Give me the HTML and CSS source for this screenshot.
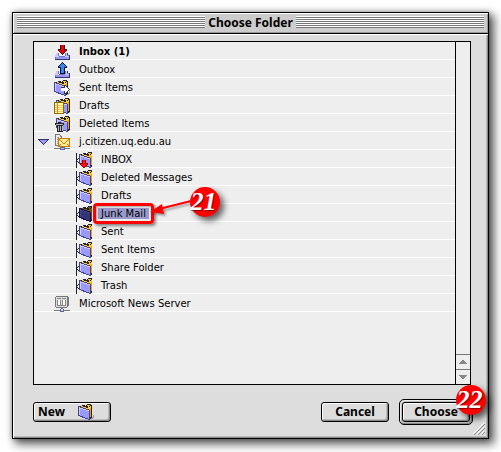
FILE: index.html
```html
<!DOCTYPE html>
<html lang="en">
<head>
<meta charset="utf-8">
<title>Choose Folder</title>
<link rel="stylesheet" href="styles.css">
</head>
<body>
<svg class="defs" aria-hidden="true">
  <symbol id="tray" viewBox="0 0 16 16">
    <path fill="#7777bb" d="M2 9h3v3h6V9h3v2h1v4H1v-4h1z"/>
    <path fill="#ccccff" d="M2 9h2v3h1v1h6v-1h1V9h1v3h2v1H1v-2h1z"/>
    <path fill="#9999ff" d="M2 13h13v2H2z"/>
    <path fill="#333366" d="M1 15h15v1H1zM15 11h1v5h-1zM13 9h1v2h-1z"/>
  </symbol>
  <symbol id="folder" viewBox="0 0 16 16">
    <path fill="#444" opacity=".4" d="M12 13h3v-2h1v3h-1v1h-3z"/>
    <path fill="#222" d="M2 2h2V1h3v1h1V1h1V0h4v1h1v13h-1v1h-2V6L2 3z"/>
    <path class="folder-paper" d="M3 2h2v1h3v1h2V2H9V1h3v1h1v2h-1v1h-2L3 3z"/>
    <path class="folder-edge" d="M12 4h1v9h-1v1h-1V5h1z"/>
    <path fill="#222" d="M5 2h1v1H5zM8 2h1v1H8zM11 2h1v1h-1z"/>
    <path class="folder-line" d="M0 2h2v1h3v1h3v1h3v1h1v10h-2v-1H7v-1H4v-1H2v-1H0z"/>
    <path class="folder-face" d="M1 3h1v1h3v1h3v1h3v9h-1v-1H7v-1H5v-1H2v-1H1z"/>
    <path class="folder-shine" d="M1 3h1v1h3v1h3v1h3v1H8V6H5V5H2v6H1z"/>
  </symbol>
  <symbol id="linked" viewBox="0 0 16 16">
    <use href="#folder" x="3" width="16" height="16"/>
    <path fill="#222" d="M0 1h1v15H0zM1 7h1v1H1zM2 6h1v1H2zM1 9h1v1H1zM2 10h1v1H2z"/>
  </symbol>
  <symbol id="server" viewBox="0 0 16 16">
    <path fill="#777" d="M1 1h1V0h12v1h1v9h-1v1h-1v1H2v-1H1z"/>
    <path fill="#ddd" d="M2 1h11v10H2z"/>
    <path fill="#888" d="M3 2h4v1H3zM8 2h4v1H8zM3 4h1v5H3zM6 4h1v5H6zM8 4h1v5H8zM11 4h1v5h-1zM3 9h9v1H3z"/>
    <path fill="#fff" d="M4 4h2v5H4zM9 4h2v5H9z"/>
    <path fill="#777" d="M7 12h2v1H7zM0 14h16v1H0z"/>
    <path fill="#666699" d="M6 13h4v3H6z"/><path fill="#ccccff" d="M7 13h2v2H7z"/>
  </symbol>
</svg>

<main class="window">
  <header class="titlebar">
    <span class="stripes"></span>
    <h1 class="title">Choose Folder</h1>
    <span class="stripes"></span>
  </header>

  <form class="content">
    <div class="pane">
      <ul class="tree">
        <li class="row row-unread">
          <svg class="icon" viewBox="0 0 16 16"><use href="#tray"/><path fill="#222" d="M6 1h5v4h2v2h-1v1h-1v1h-1v1H9v1H8v-1H7V9H6V8H5V7H4V5h2z"/><path fill="#e00" d="M7 1h3v5h2v1h-1v1h-1v1H9v1H8V9H7V8H6V7H5V6h2z"/></svg>
          <span>Inbox (1)</span>
        </li>
        <li class="row">
          <svg class="icon" viewBox="0 0 16 16"><use href="#tray"/><path fill="#113" d="M8 0h1v1h1v1h1v1h1v1h1v2h-2v6H6V6H4V4h1V3h1V2h1V1h1z"/><path fill="#3388ee" d="M8 1h1v1h1v1h1v1h1v1h-2v6H7V5H5V4h1V3h1V2h1z"/></svg>
          <span>Outbox</span>
        </li>
        <li class="row">
          <svg class="icon" viewBox="0 0 16 16"><use href="#folder" width="16" height="16"/><path fill="#335" d="M7 7h3V5h2v1h1v1h1v1h1v1h1v1h-1v1h-1v1h-1v1h-1v1h-2v-3H7z"/><path fill="#fff" d="M7 8h4V6h1v1h1v1h1v1h1v1h-1v1h-1v1h-1v1h-1v-2H7z"/></svg>
          <span>Sent Items</span>
        </li>
        <li class="row">
          <svg class="icon" viewBox="0 0 16 16"><use href="#folder" x="2" width="16" height="16"/><path fill="#996600" d="M0 4h10v12H0z"/><path fill="#ffffaa" d="M1 5h8v10H1z"/><path fill="#e8c860" d="M1 7h8v1H1zM1 9h8v1H1zM1 11h8v1H1zM1 13h8v1H1z"/><path fill="#e08030" d="M3 5h1v10H3z"/></svg>
          <span>Drafts</span>
        </li>
        <li class="row">
          <svg class="icon" viewBox="0 0 16 16"><use href="#folder" x="2" width="16" height="16"/><path fill="#222" d="M4 6h3v1h3v2H9v7H3V9H1V7h3z"/><path fill="#bbb" d="M2 8h7v1H2zM4 10h1v5H4zM6 10h1v5H6zM8 10h1v5H8z"/></svg>
          <span>Deleted Items</span>
        </li>
        <li>
          <div class="row">
            <button class="disclosure" type="button" aria-label="Collapse j.citizen.uq.edu.au" aria-expanded="true"><svg viewBox="0 0 11 7"><path fill="#333366" d="M0 0h11v1h-1v1H9v1H8v1H7v1H6v1H5V5H4V4H3V3H2V2H1V1H0z"/><path fill="#9999ff" d="M2 1h7v1H8v1H7v1H6v1H5V4H4V3H3V2H2z"/></svg></button>
            <svg class="icon" viewBox="0 0 16 16"><path fill="#777" d="M1 0h5v1h1v1h1v10H1z"/><path fill="#eee" d="M2 1h4v2h1v8H2z"/><path fill="#999" d="M3 3h2v1H3zM3 5h3v1H3zM3 7h2v1H3zM3 9h2v1H3z"/><path fill="#cc7700" d="M4 4h12v9H4z"/><path fill="#ffee99" d="M5 5h10v7H5z"/><path fill="#cc7700" d="M5 5h1v1h1v1h1v1h1v1h2V8h1V7h1V6h1V5h1v1h-1v1h-1v1h-1v1h-1v1H9V9H8V8H7V7H6V6H5zM5 11h1v-1h1v1H6v1H5zM13 10h1v1h1v1h-1v-1h-1z"/><path fill="#777" d="M0 14h16v1H0zM8 13h2v1H8z"/><path fill="#666699" d="M6 13h5v3H6z"/><path fill="#bbf" d="M7 14h3v1H7z"/></svg>
            <span>j.citizen.uq.edu.au</span>
          </div>
          <ul class="branch">
            <li class="row"><svg class="icon" viewBox="0 0 16 16"><use href="#linked"/><path fill="#900" d="M6 8h4v3h2v2h-1v1h-1v1H9v1H7v-1H6v-1H5v-1H4v-2h2z"/><path fill="#f11" d="M7 8h2v4h2v1h-1v1H9v1H7v-1H6v-1H5v-1h2z"/></svg><span>INBOX</span></li>
            <li class="row"><svg class="icon" viewBox="0 0 16 16"><use href="#linked"/></svg><span>Deleted Messages</span></li>
            <li class="row"><svg class="icon" viewBox="0 0 16 16"><use href="#linked"/></svg><span>Drafts</span></li>
            <li class="row row-selected" aria-current="true">
              <svg class="icon" viewBox="0 0 16 16"><use href="#linked"/></svg>
              <span class="selection">Junk Mail
                <span class="ring"></span>
                <svg class="arrow" viewBox="0 0 52 24" aria-hidden="true"><path fill="none" stroke="#f00" stroke-width="2" d="M46 5 10 14"/><path fill="#f00" d="M1 17 13 9 15 19z"/></svg>
                <b class="badge badge-step">21</b>
              </span>
            </li>
            <li class="row"><svg class="icon" viewBox="0 0 16 16"><use href="#linked"/></svg><span>Sent</span></li>
            <li class="row"><svg class="icon" viewBox="0 0 16 16"><use href="#linked"/></svg><span>Sent Items</span></li>
            <li class="row"><svg class="icon" viewBox="0 0 16 16"><use href="#linked"/></svg><span>Share Folder</span></li>
            <li class="row"><svg class="icon" viewBox="0 0 16 16"><use href="#linked"/></svg><span>Trash</span></li>
          </ul>
        </li>
        <li class="row">
          <svg class="icon" viewBox="0 0 16 16"><use href="#server"/></svg>
          <span>Microsoft News Server</span>
        </li>
      </ul>
      <div class="scrollbar">
        <button class="scroll" type="button" aria-label="Scroll up"><svg viewBox="0 0 8 4"><path d="M3 0h2v1h1v1h1v1h1v1H0V3h1V2h1V1h1z"/></svg></button>
        <button class="scroll" type="button" aria-label="Scroll down"><svg viewBox="0 0 8 4"><path d="M0 0h8v1H7v1H6v1H5v1H3V3H2V2H1V1H0z"/></svg></button>
      </div>
    </div>

    <footer class="actions">
      <button class="button button-new" type="button">New <svg class="icon" viewBox="0 0 16 16"><use href="#folder"/></svg></button>
      <button class="button button-cancel" type="button">Cancel</button>
      <div class="default">
        <button class="button button-choose" type="submit">Choose</button>
        <b class="badge badge-corner">22</b>
      </div>
    </footer>
  </form>
  <svg class="grip" viewBox="0 0 12 12" aria-hidden="true"><path stroke="#fff" d="M0 11 11 0M4 11l7-7M8 11l3-3"/><path stroke="#888" d="M1 12 12 1M5 12l7-7M9 12l3-3"/></svg>
</main>
</body>
</html>
```

FILE: styles.css
```css
* {
  box-sizing: border-box;
}

body {
  margin: 0;
  min-height: 100vh;
  padding: 12px 12px 13px;
  display: flex;
  background: #fff;
  color: #000;
  font: 10px/17px "DejaVu Sans", sans-serif;
}

ul {
  margin: 0;
  padding: 0;
  list-style: none;
}

button {
  margin: 0;
  padding: 0;
  border: 0;
  background: none;
  color: inherit;
}

svg {
  display: block;
  shape-rendering: crispEdges;
}

.defs {
  position: absolute;
  width: 0;
  height: 0;
}

.window {
  position: relative;
  flex: 1;
  min-width: 0;
  display: flex;
  flex-direction: column;
  border: 1px solid #000;
  background: #ddd;
  box-shadow: 4px 4px 9px 1px rgba(0, 0, 0, .65), 0 0 5px rgba(0, 0, 0, .3);
}

.titlebar {
  height: 21px;
  padding: 3px 4px;
  display: flex;
  gap: 3px;
  background: #ccc;
  border-bottom: 1px solid #000;
  box-shadow: inset 1px 1px #fff, inset -1px -1px #999;
}

.stripes {
  flex: 1;
  height: 12px;
  background: repeating-linear-gradient(#fff 0 1px, #777 1px 2px);
}

.title {
  margin: 0;
  font: bold 12px/14px "Noto Sans", sans-serif;
}

.content {
  flex: 1;
  display: flex;
  flex-direction: column;
  padding: 7px 17px 13px 20px;
  box-shadow: inset 1px 1px #fff, inset -1px -1px #888, inset -2px -2px #bbb;
}

.pane {
  flex: 1;
  display: flex;
  border: 1px solid #000;
  background: #eee;
}

.tree {
  flex: 1;
}

.row {
  --face: #9999ff;
  --shine: #ccccff;
  --line: #444488;
  --paper: #ffcc33;
  --edge: #ff9900;
  height: 18px;
  padding: 2px 0 0 20px;
  display: flex;
  align-items: center;
  gap: 9px;
  border-bottom: 1px solid #fff;
  position: relative;
  line-height: 15px;
}

.row-unread {
  font-weight: bold;
}

.row-selected {
  --face: #333377;
  --shine: #444488;
  --line: #111144;
  --paper: #775511;
  --edge: #884400;
}

.folder-face {
  fill: var(--face, #9999ff);
}

.folder-shine {
  fill: var(--shine, #ccccff);
}

.folder-line {
  fill: var(--line, #444488);
}

.folder-paper {
  fill: var(--paper, #ffcc33);
}

.folder-edge {
  fill: var(--edge, #ff9900);
}

.branch .row {
  padding-left: 42px;
}

.icon {
  flex: none;
  width: 16px;
  height: 16px;
}

.disclosure {
  position: absolute;
  left: 4px;
  top: 7px;
  width: 11px;
  height: 7px;
}

.selection {
  position: relative;
  margin-left: -3px;
  padding: 0 3px;
  background: #9999cc;
  line-height: 11px;
}

.ring {
  position: absolute;
  inset: -5px;
  border: 3px solid #f00;
  border-radius: 4px;
  box-shadow: 2px 2px 3px rgba(0, 0, 0, .45), inset 1px 1px 2px rgba(0, 0, 0, .3);
}

.arrow {
  position: absolute;
  left: 100%;
  top: -13px;
  width: 52px;
  height: 24px;
  shape-rendering: auto;
  filter: drop-shadow(2px 2px 1px rgba(0, 0, 0, .35));
}

.badge {
  position: absolute;
  z-index: 1;
  width: 30px;
  height: 30px;
  border-radius: 50%;
  background: #f00;
  color: #fff;
  font: italic bold 26px/30px "Liberation Serif", serif;
  text-align: center;
  text-indent: -3px;
  text-shadow: 1px 1px 1px rgba(0, 0, 0, .5);
  box-shadow: 4px 4px 6px rgba(0, 0, 0, .6);
}

.badge-step {
  left: 92px;
  top: -21px;
}

.scrollbar {
  width: 15px;
  display: flex;
  flex-direction: column;
  justify-content: flex-end;
  border-left: 1px solid #000;
}

.scroll {
  height: 15px;
  display: flex;
  align-items: center;
  justify-content: center;
  border-top: 1px solid #777;
  fill: #888;
}

.scroll svg {
  width: 8px;
  height: 4px;
}

.actions {
  display: flex;
  align-items: center;
  gap: 10px;
  margin-right: -2px;
  padding-top: 14px;
}

.button {
  height: 20px;
  border: 1px solid #000;
  border-radius: 3px;
  background: #ddd;
  box-shadow: inset 1px 1px #fff, inset -1px -1px #888, inset -2px -2px #bbb;
  font: bold 12px/16px "Noto Sans", sans-serif;
}

.button-new {
  width: 78px;
  margin-right: auto;
  padding-left: 4px;
  display: flex;
  align-items: center;
  gap: 13px;
}

.button-cancel {
  width: 68px;
}

.default {
  position: relative;
  padding: 2px;
  border: 1px solid #000;
  border-radius: 5px;
  background: #bbb;
  box-shadow: inset 1px 1px #eee, inset -1px -1px #888;
}

.button-choose {
  display: block;
  width: 68px;
}

.badge-corner {
  right: -14px;
  top: -15px;
}

.grip {
  position: absolute;
  right: 3px;
  bottom: 3px;
  width: 12px;
  height: 12px;
  shape-rendering: auto;
}
```
